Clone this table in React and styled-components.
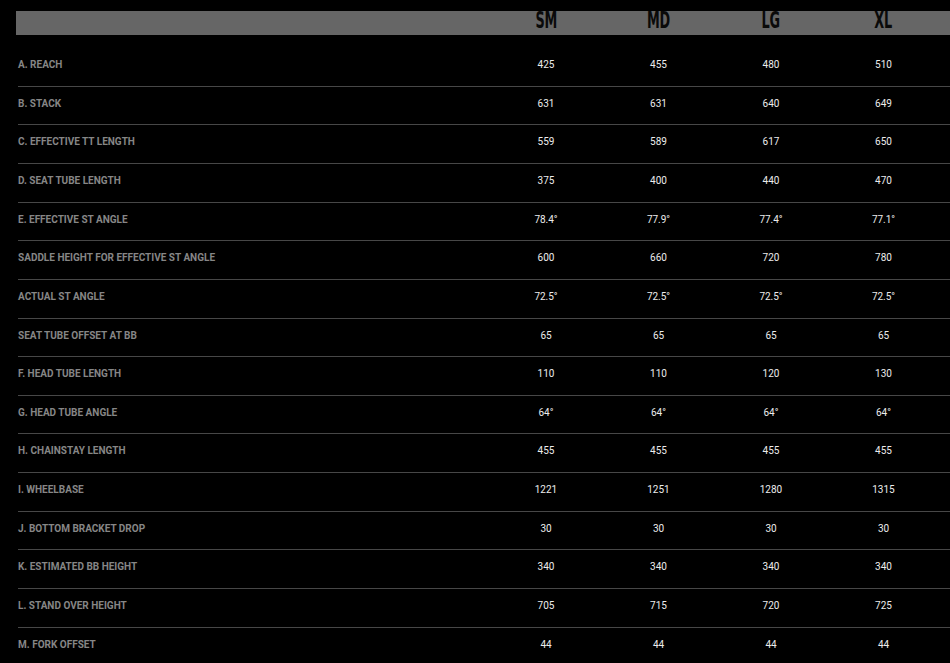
import React from 'react';
import styled, { createGlobalStyle } from 'styled-components';

const sizes = ['SM', 'MD', 'LG', 'XL'];

const rows = [
  ['A. REACH', '425', '455', '480', '510'],
  ['B. STACK', '631', '631', '640', '649'],
  ['C. EFFECTIVE TT LENGTH', '559', '589', '617', '650'],
  ['D. SEAT TUBE LENGTH', '375', '400', '440', '470'],
  ['E. EFFECTIVE ST ANGLE', '78.4°', '77.9°', '77.4°', '77.1°'],
  ['SADDLE HEIGHT FOR EFFECTIVE ST ANGLE', '600', '660', '720', '780'],
  ['ACTUAL ST ANGLE', '72.5°', '72.5°', '72.5°', '72.5°'],
  ['SEAT TUBE OFFSET AT BB', '65', '65', '65', '65'],
  ['F. HEAD TUBE LENGTH', '110', '110', '120', '130'],
  ['G. HEAD TUBE ANGLE', '64°', '64°', '64°', '64°'],
  ['H. CHAINSTAY LENGTH', '455', '455', '455', '455'],
  ['I. WHEELBASE', '1221', '1251', '1280', '1315'],
  ['J. BOTTOM BRACKET DROP', '30', '30', '30', '30'],
  ['K. ESTIMATED BB HEIGHT', '340', '340', '340', '340'],
  ['L. STAND OVER HEIGHT', '705', '715', '720', '725'],
  ['M. FORK OFFSET', '44', '44', '44', '44'],
];

const GlobalStyle = createGlobalStyle`
  html, body {
    margin: 0;
    background: #000;
    overflow: hidden;
  }
  body {
    font-family: Roboto, 'Liberation Sans', sans-serif;
  }
`;

const Page = styled.div`
  padding: 11px 0 0 16px;
  height: 663px;
  box-sizing: border-box;
  overflow: hidden;
`;

const HeaderBar = styled.div`
  display: grid;
  grid-template-columns: 473.75px repeat(4, 112.5px) 1fr;
  height: 24px;
  background: #666666;
`;

const SizeCell = styled.div`
  display: flex;
  justify-content: center;
  align-items: flex-start;
  overflow: visible;
`;

const SizeLabel = styled.span`
  display: inline-block;
  font-family: 'DejaVu Sans Condensed', 'DejaVu Sans', sans-serif;
  font-weight: bold;
  font-size: 23px;
  line-height: 22px;
  margin-top: -2px;
  color: #0a0a0a;
  transform: scaleX(0.62);
  letter-spacing: -0.5px;
`;

const Body = styled.div`
  margin: 13.2px 0 0 2px;
`;

const Row = styled.div`
  display: grid;
  grid-template-columns: 471.75px repeat(4, 112.5px) 1fr;
  height: 38.64px;
  box-sizing: border-box;
  padding-top: 11px;
  border-bottom: 1px solid #474747;
`;

const Label = styled.div`
  font-size: 10px;
  line-height: 11px;
  font-weight: 700;
  color: #868686;
  white-space: nowrap;
`;

const Value = styled.div`
  font-size: 10px;
  line-height: 11px;
  color: #ececec;
  text-align: center;
`;

export default function App() {
  return (
    <Page>
      <GlobalStyle />
      <HeaderBar>
        <div />
        {sizes.map(s => (
          <SizeCell key={s}>
            <SizeLabel>{s}</SizeLabel>
          </SizeCell>
        ))}
      </HeaderBar>
      <Body>
        {rows.map(([label, ...vals]) => (
          <Row key={label}>
            <Label>{label}</Label>
            {vals.map((v, i) => (
              <Value key={i}>{v}</Value>
            ))}
          </Row>
        ))}
      </Body>
    </Page>
  );
}
